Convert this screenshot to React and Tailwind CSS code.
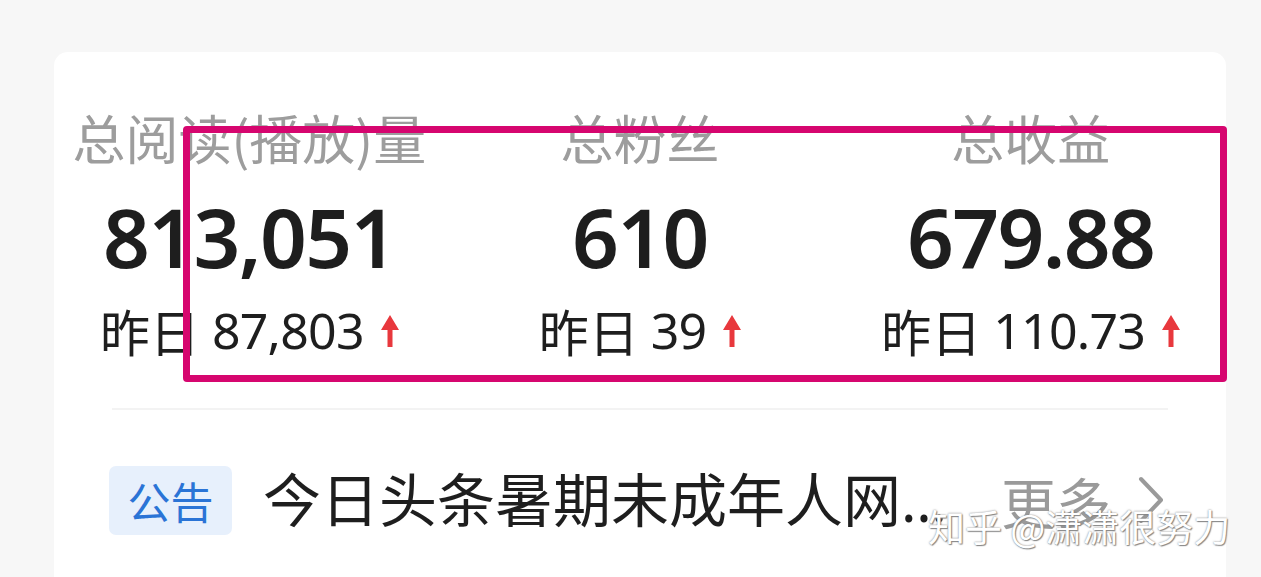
import React from 'react';

const cjk = '"Noto Sans CJK SC", "Noto Sans", sans-serif';
const num = '"Noto Sans", "Noto Sans CJK SC", sans-serif';

const stats = [
  { label: '总阅读(播放)量', value: '813,051', yday: '87,803' },
  { label: '总粉丝', value: '610', yday: '39' },
  { label: '总收益', value: '679.88', yday: '110.73' },
];

function UpArrow() {
  return (
    <svg width="18" height="32" viewBox="0 0 18 32" className="shrink-0">
      <path d="M9 0 L18 15 L11.5 15 L11.5 32 L6.5 32 L6.5 15 L0 15 Z" fill="#e8383d" />
    </svg>
  );
}

function Chevron() {
  return (
    <svg width="28" height="48" viewBox="0 0 28 48" className="shrink-0">
      <path d="M4 3 L24 24 L4 45" fill="none" stroke="#9a9a9a" strokeWidth="4" strokeLinecap="round" strokeLinejoin="round" />
    </svg>
  );
}

export default function App() {
  return (
    <div className="relative h-[577px] w-full overflow-hidden bg-[#f7f7f7] pl-[54px] pr-[35px] pt-[52px]">
      <div className="h-[560px] rounded-t-[14px] bg-white">
        {/* stats */}
        <div className="grid grid-cols-3 pt-[59px]" style={{ fontFamily: cjk }}>
          {stats.map((s) => (
            <div key={s.label} className="flex flex-col items-center">
              <div className="text-[53px] leading-[53px] text-[#9d9d9d]">{s.label}</div>
              <div
                className="mt-[30px] text-[82px] font-semibold leading-[84px] tracking-[-0.02em] text-[#1e1e1e]"
                style={{ fontFamily: num }}
              >
                {s.value}
              </div>
              <div className="mt-[25px] flex items-center text-[50px] leading-[54px] text-[#1e1e1e]">
                <span>昨日</span>
                <span className="ml-[12px] tracking-[-0.015em]" style={{ fontFamily: num }}>{s.yday}</span>
                <span className="ml-[17px] mt-[2px] flex items-center"><UpArrow /></span>
              </div>
            </div>
          ))}
        </div>

        <div className="mx-[58px] mt-[51px] h-[2px] bg-[#f3f3f3]" />

        {/* notice */}
        <div className="flex items-center pl-[55px] pr-[61px] pt-[54px]">
          <div
            className="flex h-[69px] w-[123px] shrink-0 items-center justify-center rounded-[7px] bg-[#e7f0fc] text-[43px] text-[#2a74d6]"
            style={{ fontFamily: cjk }}
          >
            公告
          </div>
          <div
            className="ml-[31px] min-w-0 flex-1 truncate text-[58px] leading-[72px] text-[#1e1e1e]"
            style={{ fontFamily: num }}
          >
            今日头条暑期未成年人网络保护专项行动公告
          </div>
          <div className="ml-[40px] flex shrink-0 items-center text-[55px] leading-[72px] text-[#9a9a9a]" style={{ fontFamily: cjk }}>
            <span>更多</span>
            <span className="ml-[26px]"><Chevron /></span>
          </div>
        </div>
      </div>

      {/* annotation box */}
      <div className="absolute left-[183px] top-[126px] h-[256px] w-[1044px] rounded-[4px] border-[7px] border-[#d6066f]" />

      {/* watermark */}
      <div
        className="absolute left-[928px] top-[502px] text-[37px] leading-[48px] text-white [text-shadow:0_0_2px_#7a7a7a,1px_1px_1px_#8a8a8a]"
        style={{ fontFamily: cjk }}
      >
        知乎 @潇潇很努力
      </div>
    </div>
  );
}
